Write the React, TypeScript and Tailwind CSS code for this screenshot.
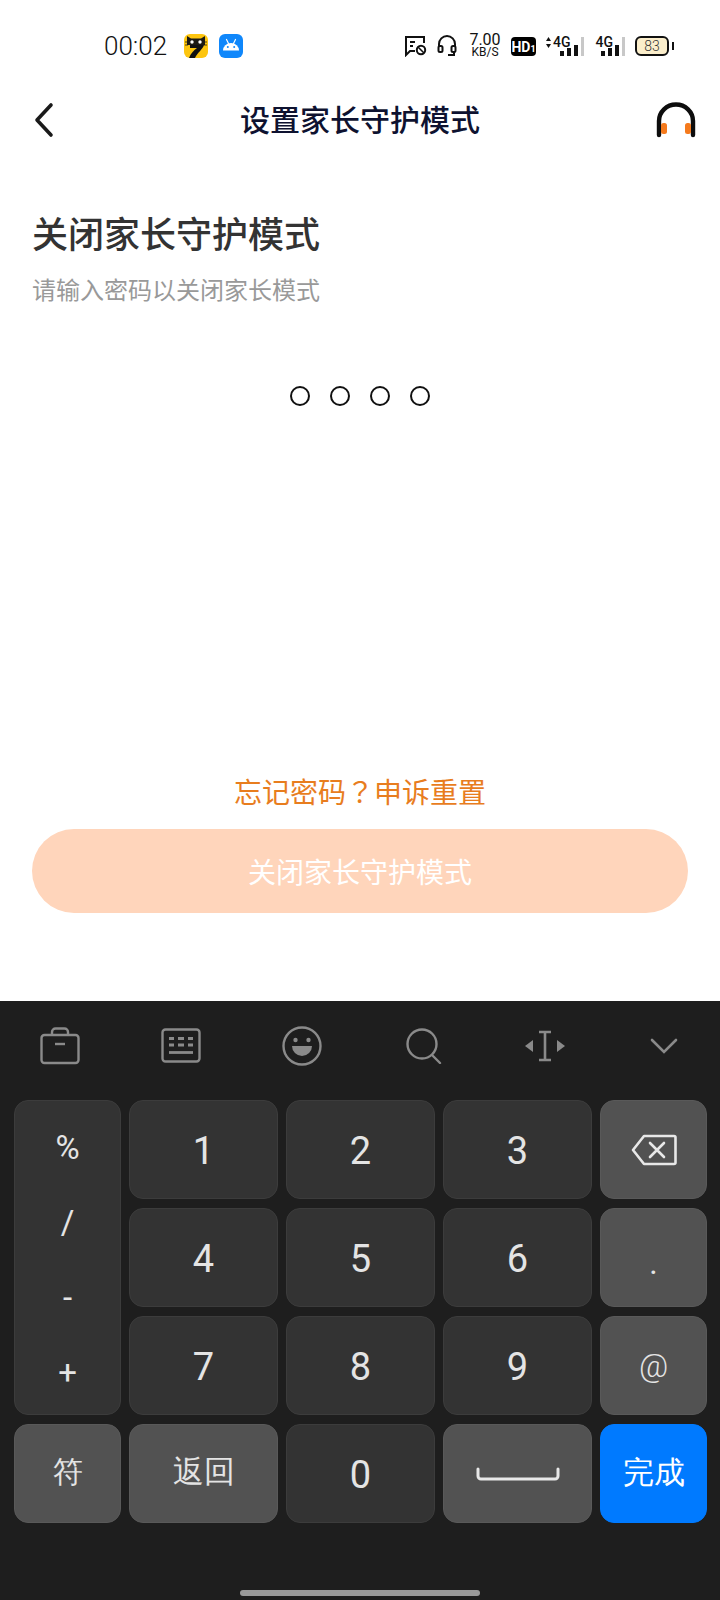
const cjk = "font-['Noto_Sans_CJK_SC','Noto_Sans',sans-serif]";
const roboto = "font-['Roboto',sans-serif]";
const keyBase = `flex items-center rounded-[14px] border text-[#e4e4e4] ${roboto}`;
const digitKey = `${keyBase} justify-center bg-[#333333] border-[#3c3c3c] text-[38px] pt-[4px]`;
const funcKey = `${keyBase} justify-center bg-[#525252] border-[#595959]`;

function CatIcon() {
  return (
    <svg width="24" height="24" viewBox="0 0 24 24">
      <rect width="24" height="24" rx="6" fill="#fdc50f" />
      <path d="M3 2 L7 4.5 H17 L21 2 V11 H3 Z" fill="#1c1a14" />
      <circle cx="8" cy="8" r="1.7" fill="#fff" />
      <circle cx="16" cy="8" r="1.7" fill="#fff" />
      <path d="M1 8 H4 M1 11 H4 M20 8 H23 M20 11 H23" stroke="#1c1a14" strokeWidth="0.8" />
      <path d="M6 11 H20 C19 15 13 19 11 24 H5 C7 19 10 16 13 14 H6 Z" fill="#111" />
    </svg>
  );
}

function AndroidIcon() {
  return (
    <svg width="24" height="24" viewBox="0 0 24 24">
      <rect width="24" height="24" rx="6" fill="#0f87fb" />
      <path d="M4 16.5 A8 7.5 0 0 1 20 16.5 Z" fill="#fff" />
      <path d="M7.5 5.5 L9.5 9.5 M16.5 5.5 L14.5 9.5" stroke="#fff" strokeWidth="1.2" strokeLinecap="round" />
      <circle cx="8.8" cy="13" r="1" fill="#0f87fb" />
      <circle cx="15.2" cy="13" r="1" fill="#0f87fb" />
    </svg>
  );
}

function MessageOffIcon() {
  return (
    <svg width="23" height="22" viewBox="0 0 23 22" fill="none" stroke="#111" strokeWidth="2">
      <path d="M11 16 H6 L2 20 V2 H20 V8" />
      <path d="M6 7 H11 M6 11 H9" strokeWidth="1.8" />
      <circle cx="17" cy="15" r="4.2" />
      <path d="M14 12 L20 18" strokeWidth="1.6" />
    </svg>
  );
}

function HeadsetIcon() {
  return (
    <svg width="20" height="22" viewBox="0 0 20 22" fill="none" stroke="#111" strokeWidth="2">
      <path d="M2 12 V9 A8 8 0 0 1 18 9 V12" />
      <rect x="1.5" y="11" width="4" height="6" rx="1.5" />
      <rect x="14.5" y="11" width="4" height="6" rx="1.5" />
      <path d="M17 17 V20 H11" />
    </svg>
  );
}

function SignalBars({ data }: { data?: boolean }) {
  return (
    <div className="flex items-end h-[20px]">
      <div className={`flex items-center self-start gap-[2px] ${data ? "-mr-[11px]" : "-mr-[12px]"}`}>
        {data && (
          <svg width="5" height="11" viewBox="0 0 5 11" fill="#111">
            <path d="M2.5 0 L5 4 H0 Z M2.5 11 L5 7 H0 Z" />
          </svg>
        )}
        <span className={`text-[14px] leading-[12px] font-medium text-[#111] ${roboto}`}>4G</span>
      </div>
      <div className="flex items-end gap-[3px]">
        <div className="w-[4px] h-[5px] bg-[#111]" />
        <div className="w-[4px] h-[8px] bg-[#111]" />
        <div className="w-[4px] h-[11px] bg-[#111]" />
      </div>
      <div className="w-[3px] h-[19px] bg-[#c8c8c8] ml-[3px]" />
    </div>
  );
}

function StatusBar() {
  return (
    <div className="h-[88px] flex items-center pt-[4px] pl-[104px] pr-[46px] bg-white">
      <span className={`text-[26px] font-light text-[#111] w-[80px] ${roboto}`}>00:02</span>
      <div className="flex items-center gap-[11px]">
        <CatIcon />
        <AndroidIcon />
      </div>
      <div className="flex items-center ml-auto">
        <MessageOffIcon />
        <div className="ml-[10px]">
          <HeadsetIcon />
        </div>
        <div className={`ml-[12px] -mt-[2px] w-[32px] flex flex-col items-center text-[#111] ${roboto}`}>
          <span className="text-[16px] leading-[15px]">7.00</span>
          <span className="text-[12px] leading-[11px]">KB/S</span>
        </div>
        <div className={`ml-[10px] w-[25px] h-[19px] rounded-[4px] bg-black text-white font-bold leading-[19px] text-center ${roboto}`}>
          <span className="text-[14px]">HD</span>
          <span className="text-[9px]">1</span>
        </div>
        <div className="ml-[10px]">
          <SignalBars data />
        </div>
        <div className="ml-[12px]">
          <SignalBars />
        </div>
        <div className="ml-[10px] flex items-center">
          <div className={`w-[34px] h-[20px] rounded-[6px] border-2 border-[#111] bg-[#fbeecb] text-[14px] font-light leading-[16px] text-center text-[#333] ${roboto}`}>
            83
          </div>
          <div className="w-[2px] h-[8px] bg-[#111] ml-[3px]" />
        </div>
      </div>
    </div>
  );
}

function NavBar() {
  return (
    <div className="h-[66px] flex items-center justify-between px-[32px]">
      <div className="w-[40px] pl-[1px] pb-[2px]">
        <svg width="22" height="36" viewBox="0 0 22 36" fill="none" stroke="#1a1a1a" strokeWidth="3.6" strokeLinecap="round" strokeLinejoin="round">
          <path d="M18 3 L4 18 L18 33" />
        </svg>
      </div>
      <h1 className={`${cjk} text-[30px] font-medium leading-[40px] text-[#0e1230] -mt-[6px]`}>设置家长守护模式</h1>
      <div className="w-[48px] flex justify-end -mr-[8px] pb-[2px]">
        <svg width="40" height="36" viewBox="0 0 40 36" fill="none">
          <path d="M3 33 V19 A17 16.5 0 0 1 37 19 V33" stroke="#0d0d0d" strokeWidth="4.4" strokeLinecap="round" />
          <rect x="5" y="21" width="6" height="11" rx="2.5" fill="#f57a1c" />
          <rect x="29" y="21" width="6" height="11" rx="2.5" fill="#f57a1c" />
        </svg>
      </div>
    </div>
  );
}

// toolbar strip above the number keys
function Toolbar() {
  return (
    <div className="h-[99px] pl-[30px] pr-[26px] flex items-center justify-between pb-[10px]">
      <div className="w-[60px] flex justify-center">
        <svg width="40" height="38" viewBox="0 0 40 38" fill="none" stroke="#8a8a8a" strokeWidth="2.4">
          <rect x="1.5" y="8" width="37" height="28" rx="3" />
          <path d="M12 8 V5 A3.5 3.5 0 0 1 15.5 1.5 H24.5 A3.5 3.5 0 0 1 28 5 V8" />
          <path d="M15 17 H25" />
        </svg>
      </div>
      <div className="w-[60px] flex justify-center">
        <svg width="40" height="35" viewBox="0 0 40 35" fill="none" stroke="#8a8a8a">
          <rect x="1.5" y="1.5" width="37" height="32" rx="3" strokeWidth="2.4" />
          <path d="M8 10.5 H13 M17 10.5 H23 M27 10.5 H32 M8 17 H13 M17 17 H23 M27 17 H32" strokeWidth="3.2" />
          <path d="M8 24.5 H32" strokeWidth="2.8" />
        </svg>
      </div>
      <div className="w-[60px] flex justify-center">
        <svg width="40" height="40" viewBox="0 0 40 40">
          <circle cx="20" cy="20" r="18.5" fill="none" stroke="#8a8a8a" strokeWidth="2.4" />
          <circle cx="13.5" cy="14" r="2.2" fill="#8a8a8a" />
          <circle cx="26.5" cy="14" r="2.2" fill="#8a8a8a" />
          <path d="M10 20 H30 A10 10 0 0 1 10 20 Z" fill="#8a8a8a" />
        </svg>
      </div>
      <div className="w-[60px] flex justify-center pl-[4px]">
        <svg width="36" height="36" viewBox="0 0 36 36" fill="none" stroke="#8a8a8a" strokeWidth="2.4">
          <circle cx="16" cy="16" r="14.5" />
          <path d="M26 27 L34 35" strokeLinecap="round" />
        </svg>
      </div>
      <div className="w-[60px] flex justify-center pl-[4px]">
        <svg width="42" height="32" viewBox="0 0 42 32">
          <path d="M9 10 V22 L1 16 Z" fill="#8a8a8a" />
          <path d="M33 10 V22 L41 16 Z" fill="#8a8a8a" />
          <path d="M15 2 H27 M21 2 V30 M15 30 H27" stroke="#8a8a8a" strokeWidth="2.6" fill="none" />
        </svg>
      </div>
      <div className="w-[60px] flex justify-center">
        <svg width="28" height="18" viewBox="0 0 28 18" fill="none" stroke="#8a8a8a" strokeWidth="2.6" strokeLinecap="round">
          <path d="M2 3 L14 15 L26 3" />
        </svg>
      </div>
    </div>
  );
}

function Keypad() {
  return (
    <div className="pl-[14px] grid grid-cols-[107px_149px_149px_149px_107px] grid-rows-[99px_99px_99px_99px] gap-x-[8px] gap-y-[9px]">
      <div className={`${keyBase} bg-[#333333] border-[#3c3c3c] row-span-3 flex-col justify-between pt-[27px] pb-[21px] text-[33px] leading-[40px]`}>
        <span>%</span>
        <span>/</span>
        <span>-</span>
        <span>+</span>
      </div>
      <div className={digitKey}>1</div>
      <div className={digitKey}>2</div>
      <div className={digitKey}>3</div>
      <div className={funcKey}>
        <svg width="46" height="32" viewBox="0 0 46 32" fill="none" stroke="#e8e8e8" strokeWidth="2.6" strokeLinejoin="round">
          <path d="M13 2 H43 A1.5 1.5 0 0 1 44.5 3.5 V28.5 A1.5 1.5 0 0 1 43 30 H13 L2 16 Z" />
          <path d="M19 9 L33 23 M33 9 L19 23" strokeLinecap="round" />
        </svg>
      </div>
      <div className={digitKey}>4</div>
      <div className={digitKey}>5</div>
      <div className={digitKey}>6</div>
      <div className={`${funcKey} text-[32px] pt-[10px]`}>.</div>
      <div className={digitKey}>7</div>
      <div className={digitKey}>8</div>
      <div className={digitKey}>9</div>
      <div className={`${funcKey} text-[32px] font-light`}>@</div>
      <div className={`${funcKey} ${cjk} text-[30px] pb-[4px]`}>符</div>
      <div className={`${funcKey} ${cjk} text-[31px] pb-[3px]`}>返回</div>
      <div className={digitKey}>0</div>
      <div className={funcKey}>
        <svg width="84" height="14" viewBox="0 0 84 14" fill="none" stroke="#e8e8e8" strokeWidth="3" strokeLinecap="round" strokeLinejoin="round">
          <path d="M2 2 V9 A3 3 0 0 0 5 12 H79 A3 3 0 0 0 82 9 V2" />
        </svg>
      </div>
      <div className={`${keyBase} ${cjk} justify-center bg-[#007aff] border-[#007aff] text-white text-[31px]`}>完成</div>
    </div>
  );
}

export default function App() {
  return (
    <div className="w-[720px] h-[1600px] flex flex-col bg-white overflow-hidden">
      <StatusBar />
      <NavBar />
      <main className="flex-1 flex flex-col px-[32px]">
        <h2 className={`${cjk} mt-[54px] text-[36px] leading-[48px] font-medium text-[#333333]`}>关闭家长守护模式</h2>
        <p className={`${cjk} mt-[17px] text-[24px] leading-[32px] text-[#999999]`}>请输入密码以关闭家长模式</p>
        <div className="mt-[81px] flex justify-center gap-[20px]">
          {[0, 1, 2, 3].map((i) => (
            <div key={i} className="w-[20px] h-[20px] rounded-full border-2 border-[#111]" />
          ))}
        </div>
        <a className={`${cjk} mt-auto text-center text-[28px] leading-[38px] text-[#e87d1e]`}>
          忘记密码<span className="font-['Noto_Sans_CJK_TC',sans-serif]">？</span>申诉重置
        </a>
        <button className={`${cjk} mt-[19px] mb-[88px] h-[84px] w-[656px] rounded-full bg-[#ffd5bb] text-white text-[28px]`}>
          关闭家长守护模式
        </button>
      </main>
      <section className="h-[599px] bg-[#1e1e1e] flex flex-col">
        <Toolbar />
        <Keypad />
        <div className="mt-auto mb-[4px] mx-auto w-[240px] h-[6px] rounded-full bg-[#999999]" />
      </section>
    </div>
  );
}
